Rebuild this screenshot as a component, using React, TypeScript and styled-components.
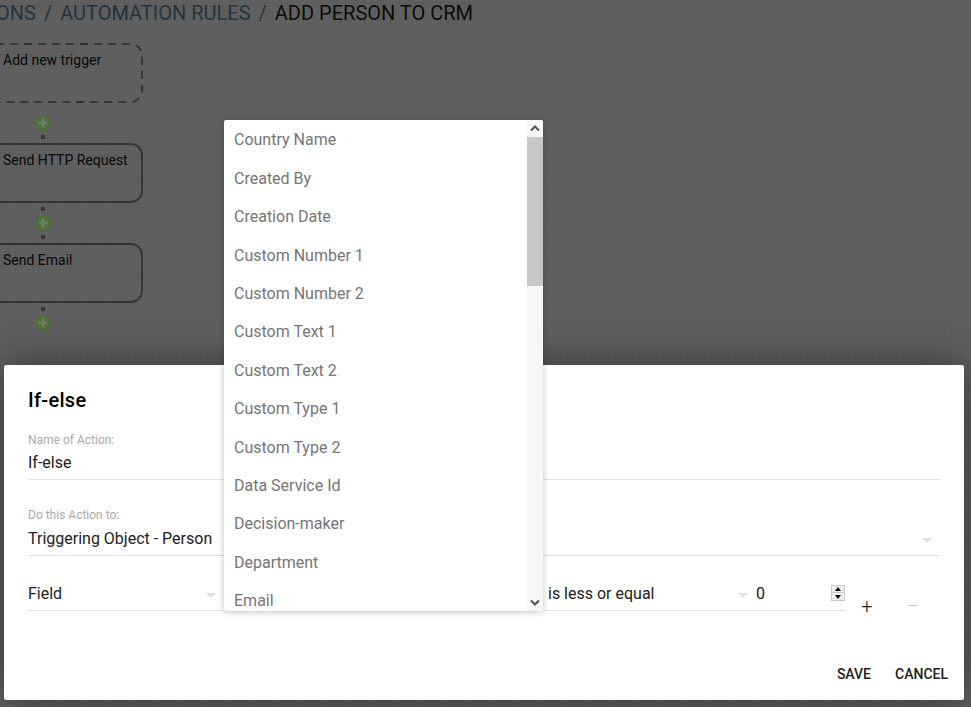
import * as React from "react";
import styled, { createGlobalStyle } from "styled-components";

const Global = createGlobalStyle`
  html, body { margin: 0; padding: 0; height: 100%; overflow: hidden; }
  body { font-family: Roboto, "Liberation Sans", sans-serif; color: #212121; background: #fff; }
`;

const Page = styled.div`
  position: relative;
  width: 971px;
  height: 707px;
  overflow: hidden;
  background: #fff;
`;

const Breadcrumb = styled.div`
  display: flex;
  gap: 8px;
  margin-left: -4px;
  height: 28px;
  line-height: 27px;
  font-size: 20px;
  white-space: nowrap;
`;

const Crumb = styled.span<{ $current?: boolean }>`
  color: ${(p) => (p.$current ? "#212121" : "#5c8aa8")};
`;

const Flow = styled.div`
  display: flex;
  flex-direction: column;
  margin-top: 15px;
  width: 143px;
`;

const Card = styled.div<{ $dashed?: boolean }>`
  position: relative;
  box-sizing: border-box;
  height: 60px;
  margin-left: -30px;
  width: 173px;
  padding: 5px 0 0 31px;
  font-size: 14px;
  line-height: 20px;
  color: #111;
  border: 2px solid ${(p) => (p.$dashed ? "transparent" : "#909090")};
  border-radius: 12px;
`;

const DashedOutline = styled.svg`
  position: absolute;
  left: -2px;
  top: -2px;
  width: 173px;
  height: 60px;
`;

const Connector = styled.div<{ $end?: boolean }>`
  display: flex;
  flex-direction: column;
  align-items: center;
  width: 86px;
  height: 40px;
  box-sizing: border-box;
  padding: 4px 0;
  justify-content: ${(p) => (p.$end ? "flex-start" : "flex-end")};
  gap: 4px;
`;

const Dot = styled.i`
  display: block;
  flex: none;
  width: 4px;
  height: 4px;
  background: #909090;
`;

const PlusIcon = styled.svg`
  position: relative;
  z-index: 1;
  display: block;
  flex: none;
  width: 16px;
  height: 16px;
`;

const Overlay = styled.div`
  position: absolute;
  z-index: 0;
  inset: 0;
  background-color: rgba(0, 0, 0, 0.63);
  background-image: radial-gradient(circle at 1.5px 1.5px, rgba(255, 255, 255, 0.05) 0 1px, transparent 1px);
  background-size: 3px 3px;
`;

const Dialog = styled.div`
  position: absolute;
  z-index: 2;
  left: 4px;
  top: 365px;
  width: 960px;
  height: 335px;
  box-sizing: border-box;
  padding: 24px 24px 8px;
  display: flex;
  flex-direction: column;
  background: #fff;
  border-radius: 2px;
  box-shadow: 0 0 40px rgba(0, 0, 0, 0.45);
`;

const Title = styled.h2`
  margin: 0 0 21.6px;
  font-size: 20px;
  font-weight: 500;
  letter-spacing: 0.3px;
  line-height: 22px;
  color: #000;
`;

const Field = styled.div`
  position: relative;
  margin-bottom: 28.2px;
  padding-bottom: 3.8px;
  border-bottom: 1px solid #e0e0e0;
`;

const Label = styled.div`
  margin-bottom: 4.6px;
  font-size: 12px;
  line-height: 14px;
  color: #aaa;
`;

const Value = styled.div`
  font-size: 16px;
  line-height: 24px;
  color: #212121;
`;

const Arrow = styled.span`
  position: absolute;
  right: 8px;
  bottom: 12px;
  width: 0;
  height: 0;
  border-left: 5px solid transparent;
  border-right: 5px solid transparent;
  border-top: 5px solid #e0e0e0;
`;

const ConditionRow = styled.div`
  display: flex;
  align-items: flex-start;
  margin-top: -1.8px;
`;

const SelectBox = styled.div<{ $width: number }>`
  position: relative;
  box-sizing: border-box;
  width: ${(p) => p.$width}px;
  height: 29px;
  border-bottom: 1px solid #e0e0e0;
`;

const Spinner = styled.div`
  position: absolute;
  right: 1px;
  top: 3px;
  box-sizing: border-box;
  display: flex;
  flex-direction: column;
  gap: 1px;
  width: 14px;
  height: 16px;
  border: 1px solid #c8c8c8;
  background: #c8c8c8;
`;

const SpinStep = styled.span<{ $down?: boolean }>`
  flex: 1;
  display: flex;
  align-items: center;
  justify-content: center;
  background: #f0f0f0;

  &::before {
    content: "";
    border-left: 3.5px solid transparent;
    border-right: 3.5px solid transparent;
    ${(p) => (p.$down ? "border-top: 4px solid #000;" : "border-bottom: 4px solid #000;")}
  }
`;

const RowButtons = styled.div`
  display: flex;
  gap: 4px;
  margin-top: 9px;
`;

const RowButton = styled.button<{ $off?: boolean }>`
  width: 42px;
  height: 30px;
  padding: 0;
  border: 0;
  background: transparent;
  font-family: inherit;
  font-size: 20px;
  font-weight: 300;
  line-height: 30px;
  color: ${(p) => (p.$off ? "#c8c8c8" : "#212121")};
`;

const Actions = styled.div`
  display: flex;
  justify-content: flex-end;
  gap: 8px;
  margin: auto -16px 0 0;
`;

const ActionButton = styled.button`
  height: 36px;
  padding: 0 8px;
  border: 0;
  background: transparent;
  font-family: inherit;
  font-size: 14px;
  font-weight: 500;
  text-transform: uppercase;
  color: #212121;
`;

const Menu = styled.div`
  position: absolute;
  z-index: 3;
  left: 224px;
  top: 120px;
  width: 319px;
  height: 491px;
  display: flex;
  background: #fff;
  border-radius: 2px;
  overflow: hidden;
  box-shadow: 0 1px 6px rgba(0, 0, 0, 0.25);
`;

const MenuList = styled.div`
  flex: 1;
  min-width: 0;
  padding-top: 1.4px;
`;

const MenuItem = styled.div`
  padding-left: 10px;
  height: 38.4px;
  line-height: 38px;
  font-size: 16px;
  color: #757575;
`;

const Scrollbar = styled.div`
  flex: none;
  display: flex;
  flex-direction: column;
  width: 16px;
  background: #f7f7f7;
`;

const ScrollArrow = styled.svg`
  display: block;
  flex: none;
  width: 16px;
  height: 17px;
`;

const ScrollTrack = styled.div`
  flex: 1;
`;

const ScrollThumb = styled.div`
  height: 149px;
  background: #c8c8c8;
`;

const items = [
  "Country Name", "Created By", "Creation Date", "Custom Number 1", "Custom Number 2",
  "Custom Text 1", "Custom Text 2", "Custom Type 1", "Custom Type 2", "Data Service Id",
  "Decision-maker", "Department", "Email",
];

const AddStep = () => (
  <PlusIcon viewBox="0 0 16 16">
    <circle cx="8" cy="8" r="8" fill="#4f7038" />
    <path d="M8 3.5v9M3.5 8h9" stroke="#6f7d67" strokeWidth="3" />
  </PlusIcon>
);

export default function App() {
  return (
    <Page>
      <Global />
      <Breadcrumb>
        <Crumb>ONS</Crumb><Crumb>/</Crumb><Crumb>AUTOMATION RULES</Crumb><Crumb>/</Crumb>
        <Crumb $current>ADD PERSON TO CRM</Crumb>
      </Breadcrumb>
      <Flow>
        <Card $dashed>
          <DashedOutline viewBox="0 0 173 60">
            <rect x="1" y="1" width="171" height="58" rx="11" fill="none" stroke="#909090" strokeWidth="2" strokeDasharray="8 6" />
          </DashedOutline>
          Add new trigger
        </Card>
        <Connector><AddStep /><Dot /></Connector>
        <Card>Send HTTP Request</Card>
        <Connector><Dot /><AddStep /><Dot /></Connector>
        <Card>Send Email</Card>
        <Connector $end><Dot /><AddStep /></Connector>
      </Flow>
      <Overlay />
      <Dialog>
        <Title>If-else</Title>
        <Field><Label>Name of Action:</Label><Value>If-else</Value></Field>
        <Field>
          <Label>Do this Action to:</Label>
          <Value>Triggering Object - Person</Value>
          <Arrow />
        </Field>
        <ConditionRow>
          <SelectBox $width={196}><Value>Field</Value><Arrow /></SelectBox>
          <SelectBox $width={324} />
          <SelectBox $width={208}><Value>is less or equal</Value><Arrow /></SelectBox>
          <SelectBox $width={90}>
            <Value>0</Value>
            <Spinner><SpinStep /><SpinStep $down /></Spinner>
          </SelectBox>
          <RowButtons>
            <RowButton>+</RowButton>
            <RowButton $off>–</RowButton>
          </RowButtons>
        </ConditionRow>
        <Actions>
          <ActionButton>Save</ActionButton>
          <ActionButton>Cancel</ActionButton>
        </Actions>
      </Dialog>
      <Menu>
        <MenuList>
          {items.map((t) => <MenuItem key={t}>{t}</MenuItem>)}
        </MenuList>
        <Scrollbar>
          <ScrollArrow viewBox="0 0 16 17">
            <path d="M4 10.5 8 6.5l4 4" fill="none" stroke="#505050" strokeWidth="2" />
          </ScrollArrow>
          <ScrollThumb />
          <ScrollTrack />
          <ScrollArrow viewBox="0 0 16 17">
            <path d="M4 6.5 8 10.5l4-4" fill="none" stroke="#505050" strokeWidth="2" />
          </ScrollArrow>
        </Scrollbar>
      </Menu>
    </Page>
  );
}
